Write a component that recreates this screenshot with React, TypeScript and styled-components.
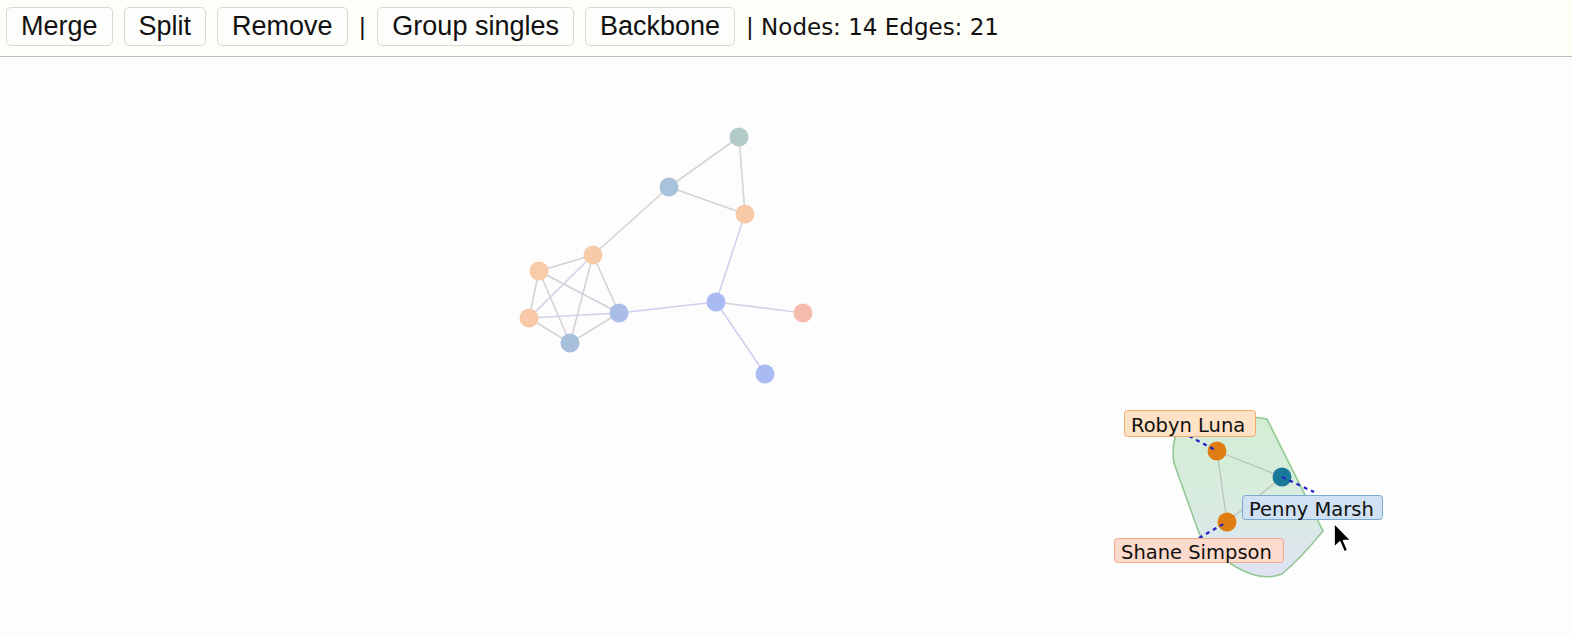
import React from 'react';
import styled, { createGlobalStyle } from 'styled-components';

const GlobalStyle = createGlobalStyle`
  html, body {
    margin: 0;
    padding: 0;
    background: #fefefa;
    overflow: hidden;
  }
  body {
    font-family: "DejaVu Sans", Verdana, sans-serif;
  }
`;

const Page = styled.div`
  width: 1572px;
  height: 636px;
  display: flex;
  flex-direction: column;
`;

const Toolbar = styled.div`
  display: flex;
  align-items: center;
  gap: 11px;
  height: 57px;
  flex-shrink: 0;
  padding: 0 6px;
  box-sizing: border-box;
  border-bottom: 1px solid #bdbdbd;
  background: #fefef8;
`;

const Button = styled.button`
  height: 39px;
  padding: 0 14px;
  margin-top: -3px;
  border: 1px solid #d8d8d2;
  border-radius: 5px;
  background: #fdfdfb;
  color: #111;
  font-family: "Liberation Sans", Arial, sans-serif;
  font-size: 27px;
  cursor: pointer;
`;

const Sep = styled.span`
  font-size: 23px;
  color: #111;
  margin-top: -3px;
`;

const Stats = styled.span`
  font-size: 23px;
  color: #111;
  white-space: pre;
  margin-top: -3px;
`;

const Canvas = styled.div`
  flex: 1;
  background: #fdfdfe;
`;

const Graph = styled.svg`
  display: block;
  width: 1572px;
  height: 579px;
`;

const LabelText = styled.text`
  font-family: "DejaVu Sans", Verdana, sans-serif;
  font-size: 19.5px;
  fill: #111;
`;

type N = { id: string; x: number; y: number; c: string };

const faded: N[] = [
  { id: 'a', x: 739, y: 136, c: '#b2cbc9' },
  { id: 'b', x: 669, y: 186, c: '#a9c2dc' },
  { id: 'c', x: 745, y: 213, c: '#f8caa8' },
  { id: 'd', x: 593, y: 254, c: '#f8cba8' },
  { id: 'e', x: 539, y: 270, c: '#f8cca8' },
  { id: 'f', x: 529, y: 317, c: '#f8c8a8' },
  { id: 'g', x: 619, y: 312, c: '#a9bde6' },
  { id: 'h', x: 570, y: 342, c: '#a8bfda' },
  { id: 'i', x: 716, y: 301, c: '#a9bbf2' },
  { id: 'j', x: 803, y: 312, c: '#f5bcae' },
  { id: 'k', x: 765, y: 373, c: '#aabaf3' },
];

const fadedEdges: [string, string, string][] = [
  ['a', 'b', '#d2d6d0'],
  ['a', 'c', '#d2d6d0'],
  ['b', 'c', '#d4d2d8'],
  ['b', 'd', '#d6d4d0'],
  ['c', 'i', '#cfd0f0'],
  ['d', 'e', '#d6d2d4'],
  ['d', 'f', '#d0d2e4'],
  ['d', 'g', '#d4d4d8'],
  ['d', 'h', '#d4d4d4'],
  ['e', 'f', '#d6d4d0'],
  ['e', 'g', '#d0d0dc'],
  ['e', 'h', '#d4d4d4'],
  ['f', 'g', '#d0d2e8'],
  ['f', 'h', '#d4d4d4'],
  ['g', 'h', '#d4d4dc'],
  ['g', 'i', '#cdd0f0'],
  ['i', 'j', '#d4d2e0'],
  ['i', 'k', '#d0d0ec'],
];

const find = (id: string) => faded.find((n) => n.id === id)!;

const robyn = { x: 1217, y: 450 };
const penny = { x: 1282, y: 476 };
const shane = { x: 1227, y: 521 };

const Cursor: React.FC<{ x: number; y: number }> = ({ x, y }) => (
  <g transform={`translate(${x} ${y}) scale(1.45)`}>
    <polygon
      points="0,0 0,17 4,13.2 7,20 9.6,18.9 6.7,12.2 12,12.2"
      fill="#000"
      stroke="#fff"
      strokeWidth="1.2"
      strokeLinejoin="round"
    />
  </g>
);

export default function App() {
  return (
    <Page>
      <GlobalStyle />
      <Toolbar>
        <Button>Merge</Button>
        <Button>Split</Button>
        <Button>Remove</Button>
        <Sep>|</Sep>
        <Button>Group singles</Button>
        <Button>Backbone</Button>
        <Stats>| Nodes: 14 Edges: 21</Stats>
      </Toolbar>
      <Canvas>
        <Graph viewBox="0 56 1572 579">
          <defs>
            <linearGradient id="hullFill" x1="0" y1="0" x2="0" y2="1">
              <stop offset="0" stopColor="#d3eed3" />
              <stop offset="0.55" stopColor="#d8ebe0" />
              <stop offset="1" stopColor="#dfe2f4" />
            </linearGradient>
          </defs>

          {fadedEdges.map(([s, t, c]) => {
            const a = find(s);
            const b = find(t);
            return (
              <line key={s + t} x1={a.x} y1={a.y} x2={b.x} y2={b.y} stroke={c} strokeWidth="1.6" />
            );
          })}
          {faded.map((n) => (
            <circle key={n.id} cx={n.x} cy={n.y} r="9.5" fill={n.c} />
          ))}

          <path
            d="M1183,421 Q1198,411 1240,414 L1267,418 L1323,530 Q1302,556 1282,573 Q1262,581 1236,566 Q1210,550 1199,532 L1174,462 Q1170,438 1183,421 Z"
            fill="url(#hullFill)"
            stroke="#93c993"
            strokeWidth="1.6"
          />

          <g stroke="#b9c4b9" strokeWidth="1.3">
            <line x1={robyn.x} y1={robyn.y} x2={penny.x} y2={penny.y} />
            <line x1={robyn.x} y1={robyn.y} x2={shane.x} y2={shane.y} />
            <line x1={penny.x} y1={penny.y} x2={shane.x} y2={shane.y} />
          </g>

          <circle cx={robyn.x} cy={robyn.y} r="9.5" fill="#df7d12" />
          <circle cx={penny.x} cy={penny.y} r="9.5" fill="#18799a" />
          <circle cx={shane.x} cy={shane.y} r="9.5" fill="#df7d12" />

          <g stroke="#1f22c8" strokeWidth="2.2" strokeDasharray="4 4" fill="none">
            <line x1={1189} y1={435} x2={robyn.x} y2={robyn.y} />
            <line x1={penny.x} y1={penny.y} x2={1314} y2={491} />
            <line x1={1199} y1={537} x2={shane.x} y2={shane.y} />
          </g>

          <rect x="1124.5" y="409.5" width="131" height="26" rx="3" fill="#fde2c6" stroke="#f0a86c" />
          <LabelText x="1131" y="431">Robyn Luna</LabelText>

          <rect x="1242.5" y="494.5" width="140" height="24" rx="3" fill="#cfe1f2" stroke="#78a9d3" />
          <LabelText x="1249" y="514.5">Penny Marsh</LabelText>

          <rect x="1114.5" y="537.5" width="169" height="24" rx="3" fill="#fddbcc" stroke="#f2a88e" />
          <LabelText x="1121" y="557.5">Shane Simpson</LabelText>

          <Cursor x={1334} y={522} />
        </Graph>
      </Canvas>
    </Page>
  );
}
